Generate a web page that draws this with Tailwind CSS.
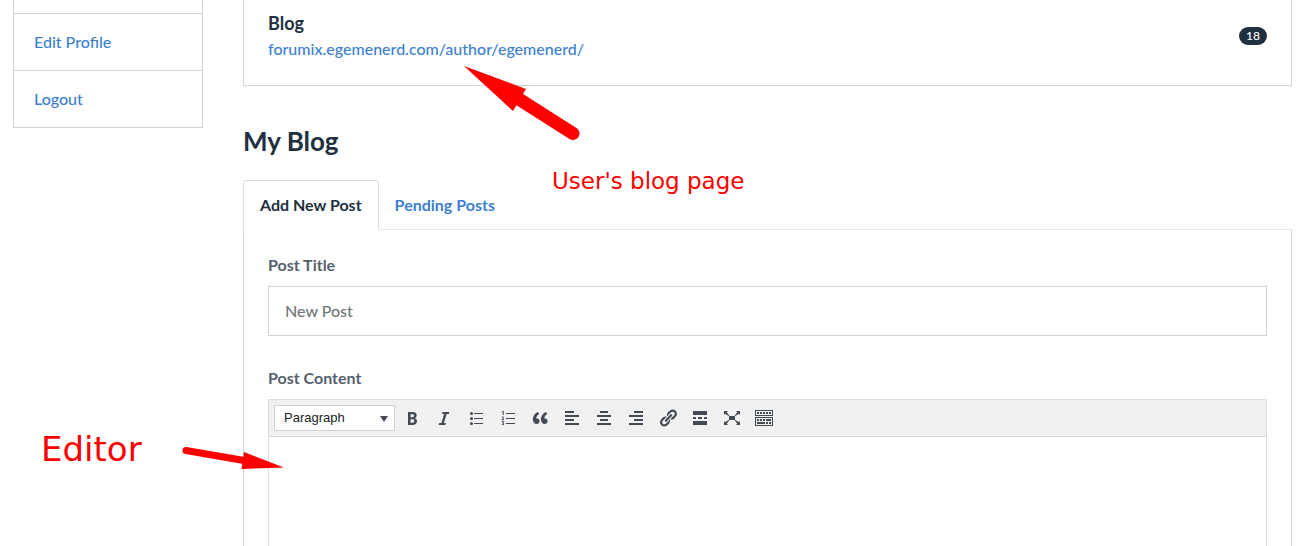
<!DOCTYPE html>
<html lang="en">
<head>
<meta charset="utf-8">
<meta name="viewport" content="width=device-width, initial-scale=1">
<title>My Blog</title>
<script src="https://cdn.jsdelivr.net/npm/@tailwindcss/browser@4"></script>
</head>
<body class="bg-white font-['Lato',sans-serif] text-base text-[#203040]">
<div class="relative flex min-h-screen gap-10 pl-[13px] pr-[9px]">
  <nav class="w-[190px] shrink-0" aria-label="Account">
    <ul class="border-x border-b border-[#d3d3d3] pt-[13px] font-medium text-[#3d7fd1]">
      <li class="border-t border-[#d3d3d3]"><a href="#" class="block px-5 py-4 leading-6">Edit Profile</a></li>
      <li class="border-t border-[#d3d3d3]"><a href="#" class="block px-5 py-4 leading-6">Logout</a></li>
    </ul>
  </nav>

  <main class="flex min-w-0 grow flex-col">
    <section class="flex items-center justify-between border-x border-b border-[#d3d3d3] px-6 pt-[11px] pb-6">
      <div class="flex flex-col gap-0.5 leading-6">
        <h2 class="text-lg leading-6 font-bold">Blog</h2>
        <a href="#" class="font-medium text-[#3d7fd1]">forumix.egemenerd.com/author/egemenerd/</a>
      </div>
      <span class="flex h-[18px] w-7 items-center justify-center rounded-full bg-[#203040] text-xs font-medium text-white">18</span>
    </section>

    <h1 class="mt-[39px] text-[26px] leading-8 font-bold">My Blog</h1>

    <div role="tablist" class="mt-[23px] flex border-b border-[#e8e9ea] font-bold">
      <button type="button" role="tab" aria-selected="true" class="-mb-px h-[50px] rounded-t border border-b-white border-[#d8dde0] bg-white px-4">Add New Post</button>
      <button type="button" role="tab" aria-selected="false" class="h-[49px] px-4 text-[#3d7fd1]">Pending Posts</button>
    </div>

    <form class="flex grow flex-col border-x border-[#d3d3d3] px-6 pt-[23px]">
      <label for="title" class="leading-6 font-bold text-[#565f6e]">Post Title</label>
      <input id="title" type="text" placeholder="New Post" class="mt-[9px] h-[50px] border border-[#d3d3d3] px-4 pb-0.5 font-medium placeholder:text-[#6f7777]">
      <label for="content" class="mt-[30px] leading-6 font-bold text-[#565f6e]">Post Content</label>
      <div class="mt-[9px] flex grow flex-col border-x border-t border-[#dedede]">
        <div class="flex items-center border-b border-[#d3d3d3] bg-[#f1f1f1] px-[5px] py-[5px] text-[#434a54]">
          <div class="relative mr-[7px]">
            <select aria-label="Format" class="block h-[26px] w-[121px] appearance-none border border-[#d3d3d3] bg-white pl-[9px] font-['Liberation_Sans',sans-serif] text-[13px] text-[#222]">
              <option>Paragraph</option>
              <option>Heading 1</option>
              <option>Heading 2</option>
            </select>
            <svg class="pointer-events-none absolute top-[11px] right-[7px] h-[6px] w-[8px]" viewBox="0 0 8 6" fill="currentColor"><path d="M0 0h8L4 6z"/></svg>
          </div>
          <div class="flex gap-3">
            <button type="button" aria-label="Bold"><svg class="size-5" viewBox="0 0 20 20" fill="currentColor"><path d="M6 4v13h4.54c1.37 0 2.46-.33 3.26-1 .8-.66 1.2-1.58 1.2-2.77 0-.84-.17-1.51-.51-2.01s-.9-.85-1.67-1.03v-.09c.57-.1 1.02-.4 1.36-.9s.51-1.13.51-1.91c0-1.14-.39-1.98-1.17-2.5C12.75 4.26 11.5 4 9.78 4H6zm2.57 5.15V6.26h1.36c.73 0 1.27.11 1.61.32.34.22.51.58.51 1.07 0 .54-.16.92-.47 1.15s-.82.35-1.51.35h-1.5zm0 2.19h1.6c1.44 0 2.16.53 2.16 1.61 0 .6-.17 1.05-.51 1.34s-.86.43-1.57.43H8.57v-3.38z"/></svg></button>
            <button type="button" aria-label="Italic"><svg class="size-5" viewBox="0 0 20 20" fill="currentColor"><path d="M14.78 6h-2.13l-2.8 9h2.12l-.62 2H4.6l.62-2h2.14l2.8-9H8.03l.62-2h6.75z"/></svg></button>
            <button type="button" aria-label="Bulleted list"><svg class="size-5" viewBox="0 0 20 20" fill="currentColor"><circle cx="5.5" cy="5.5" r="1.5"/><circle cx="5.5" cy="10.5" r="1.5"/><circle cx="5.5" cy="15.5" r="1.5"/><path d="M8 5h9v1H8zM8 10h9v1H8zM8 15h9v1H8z"/></svg></button>
            <button type="button" aria-label="Numbered list"><svg class="size-5" viewBox="0 0 20 20" fill="currentColor"><path d="M8 5h9v1H8zM8 10h9v1H8zM8 15h9v1H8z"/><path d="M4 4l1.2-.8V7M3.8 9.3q1.2-1 1.9 0 .4.9-1.9 2.5H6M3.9 13.8h1.9l-1.2 1.3q1.6.1 1.2 1.2-.6 1-2 .3" fill="none" stroke="currentColor" stroke-width="1"/></svg></button>
            <button type="button" aria-label="Quote"><svg class="size-5" viewBox="0 0 20 20" fill="currentColor"><path d="M9.49 13.22c0-.74-.2-1.38-.61-1.9-.62-.78-1.83-.88-2.53-.72-.29-1.65 1.11-3.75 2.92-4.65L7.88 4c-2.73 1.3-5.42 4.28-4.96 8.05C3.21 14.43 4.59 16 6.54 16c.85 0 1.56-.25 2.12-.75s.83-1.18.83-2.03zm8.05 0c0-.74-.2-1.38-.61-1.9-.63-.78-1.83-.88-2.53-.72-.29-1.65 1.11-3.75 2.92-4.65L15.93 4c-2.73 1.3-5.41 4.28-4.95 8.05.29 2.38 1.66 3.95 3.61 3.95.85 0 1.56-.25 2.12-.75s.83-1.18.83-2.03z"/></svg></button>
            <button type="button" aria-label="Align left"><svg class="size-5" viewBox="0 0 20 20" fill="currentColor"><path d="M3 3h9v2H3zM3 7h14v2H3zM3 11h9v2H3zM3 15h14v2H3z"/></svg></button>
            <button type="button" aria-label="Align center"><svg class="size-5" viewBox="0 0 20 20" fill="currentColor"><path d="M6 3h8v2H6zM3 7h14v2H3zM6 11h8v2H6zM3 15h14v2H3z"/></svg></button>
            <button type="button" aria-label="Align right"><svg class="size-5" viewBox="0 0 20 20" fill="currentColor"><path d="M8 3h9v2H8zM3 7h14v2H3zM8 11h9v2H8zM3 15h14v2H3z"/></svg></button>
            <button type="button" aria-label="Link"><svg class="size-5" viewBox="0 0 20 20" fill="currentColor"><path d="M17.74 2.76c1.68 1.69 1.68 4.41 0 6.1l-1.53 1.52c-1.12 1.12-2.7 1.47-4.14 1.09l2.62-2.61.76-.77.76-.76c.84-.84.84-2.2 0-3.04-.84-.85-2.2-.85-3.04 0l-.77.76-3.38 3.38c-.37-1.44-.02-3.02 1.1-4.14l1.52-1.53c1.69-1.68 4.42-1.68 6.1 0zM8.59 13.43l5.34-5.34c.42-.42.42-1.1 0-1.52-.44-.43-1.13-.39-1.53 0l-5.33 5.34c-.42.42-.42 1.1 0 1.52.44.43 1.13.39 1.52 0zm-.76 2.29l4.14-4.15c.38 1.44.03 3.02-1.09 4.14l-1.52 1.53c-1.69 1.68-4.41 1.68-6.1 0-1.68-1.68-1.68-4.42 0-6.1l1.53-1.52c1.12-1.12 2.7-1.47 4.14-1.1l-4.14 4.15c-.85.84-.85 2.2 0 3.05.84.84 2.2.84 3.04 0z"/></svg></button>
            <button type="button" aria-label="Read more"><svg class="size-5" viewBox="0 0 20 20" fill="currentColor"><path d="M3 3h14v4H3zM3 9h3v2H3zM8 9h4v2H8zM14 9h3v2h-3zM3 13h14v4H3z"/></svg></button>
            <button type="button" aria-label="Fullscreen"><svg class="size-5" viewBox="0 0 20 20" fill="currentColor"><path d="M7 8h6v4H7zM2 13v4h4l-1.2-1.2L7.5 12H6.500L3.2 14.2zM14 17h4v-4l-1.2 1.2L13.500 12h-1l2.700 3.800zM14 3l1.2 1.2L12.500 8h1l3.300-2.200L18 7V3zM6 3H2v4l1.2-1.200L6.500 8h1L4.800 4.200z"/></svg></button>
            <button type="button" aria-label="Toolbar toggle"><svg class="size-5" viewBox="0 0 20 20" fill="currentColor"><path d="M19 2v6H1V2h18zm-1 5V3H2v4h16zM5 4v2H3V4h2zm3 0v2H6V4h2zm3 0v2H9V4h2zm3 0v2h-2V4h2zm3 0v2h-2V4h2zm2 5v9H1V9h18zm-1 8v-7H2v7h16zM5 11v2H3v-2h2zm3 0v2H6v-2h2zm3 0v2H9v-2h2zm6 0v2h-5v-2h5zm-6 3v2H3v-2h8zm3 0v2h-2v-2h2zm3 0v2h-2v-2h2z"/></svg></button>
          </div>
        </div>
        <textarea id="content" class="block min-h-[109px] w-full grow resize-none p-3 outline-none"></textarea>
      </div>
    </form>
  </main>

  <!-- Annotations laid over the page -->
  <svg class="pointer-events-none absolute top-[66px] left-[464px] h-[76px] w-[118px]" viewBox="0 0 118 76" aria-hidden="true"><path d="M0 0l62 23-13 22z" fill="red"/><path d="M50 30l59 37.500" stroke="red" stroke-width="13" stroke-linecap="round"/></svg>
  <p class="absolute top-[167px] left-[552px] font-['DejaVu_Sans',sans-serif] text-[23px] leading-7 text-[#f00]">User's blog page</p>
  <svg class="pointer-events-none absolute top-[444px] left-[180px] h-[28px] w-[106px]" viewBox="0 0 106 28" aria-hidden="true"><path d="M104 23.500L64 8l-2.500 17z" fill="red"/><path d="M6 6.500l58 10" stroke="red" stroke-width="7" stroke-linecap="round"/></svg>
  <p class="absolute top-[429px] left-[41px] font-['DejaVu_Sans',sans-serif] text-[34px] leading-10 text-[#f00]">Editor</p>
</div>
</body>
</html>
